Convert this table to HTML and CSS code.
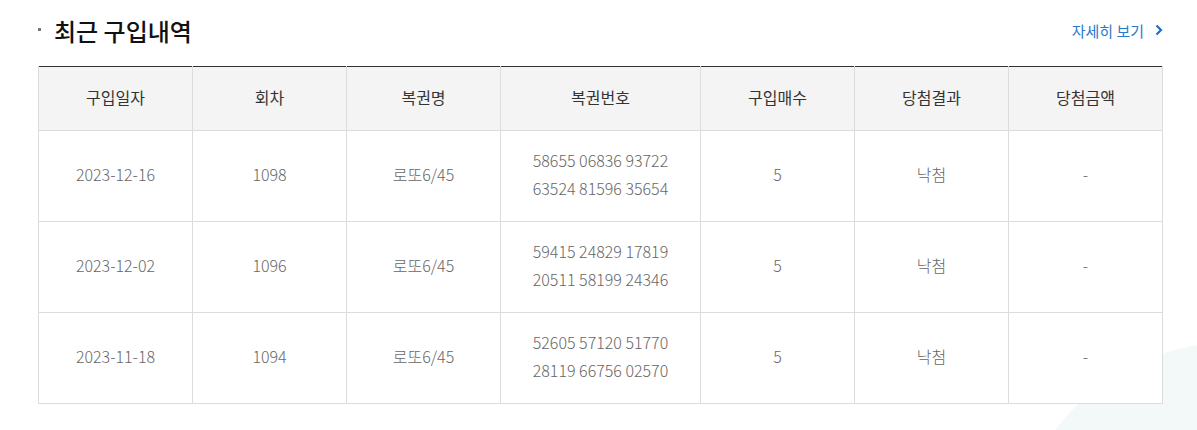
FILE: index.html
```html
<!DOCTYPE html>
<html>
<head>
    <title>최근 구입내역</title>
    <link rel="stylesheet" href="styles.css">
</head>
<body>
    <div class="page">
        <div class="deco"></div>
        <div class="section">
            <div class="section-head">
                <h2 class="title">최근 구입내역</h2>
                <a class="more" href="#">자세히 보기
                    <svg width="8" height="12" viewBox="0 0 8 12"><path d="M1.5 1.5 L6 6 L1.5 10.5" fill="none" stroke="#1f6fc6" stroke-width="2.2"/></svg>
                </a>
            </div>
            <table class="history">
                <colgroup>
                    <col class="c-sm"><col class="c-sm"><col class="c-sm">
                    <col class="c-lg"><col class="c-sm"><col class="c-sm"><col>
                </colgroup>
                <thead>
                    <tr>
                        <th>구입일자</th>
                        <th>회차</th>
                        <th>복권명</th>
                        <th>복권번호</th>
                        <th>구입매수</th>
                        <th>당첨결과</th>
                        <th>당첨금액</th>
                    </tr>
                </thead>
                <tbody>
                    <tr>
                        <td>2023-12-16</td>
                        <td>1098</td>
                        <td>로또6/45</td>
                        <td>58655 06836 93722<br>63524 81596 35654</td>
                        <td>5</td>
                        <td>낙첨</td>
                        <td>-</td>
                    </tr>
                    <tr>
                        <td>2023-12-02</td>
                        <td>1096</td>
                        <td>로또6/45</td>
                        <td>59415 24829 17819<br>20511 58199 24346</td>
                        <td>5</td>
                        <td>낙첨</td>
                        <td>-</td>
                    </tr>
                    <tr>
                        <td>2023-11-18</td>
                        <td>1094</td>
                        <td>로또6/45</td>
                        <td>52605 57120 51770<br>28119 66756 02570</td>
                        <td>5</td>
                        <td>낙첨</td>
                        <td>-</td>
                    </tr>
                </tbody>
            </table>
        </div>
    </div>
</body>
</html>
```

FILE: styles.css
```css
body {
    margin: 0;
    font-family: "Noto Sans CJK KR", "Noto Sans", sans-serif;
    background: #fff;
}
.page {
    position: relative;
    height: 430px;
    overflow: hidden;
}
.deco {
    position: absolute;
    left: 1012px;
    top: 343px;
    width: 434px;
    height: 434px;
    border-radius: 50%;
    background: #f2f9f8;
}
.section {
    position: relative;
    width: 1125px;
    margin-left: 38px;
}
.section-head {
    display: flex;
    justify-content: space-between;
    align-items: center;
    height: 66px;
}
.title {
    margin: 0;
    padding-left: 16px;
    position: relative;
    font-size: 24px;
    font-weight: 500;
    color: #111;
    top: -3px;
}
.title::before {
    content: "";
    position: absolute;
    left: 0;
    top: 15px;
    width: 3px;
    height: 3px;
    background: #777;
}
.more {
    display: flex;
    align-items: center;
    gap: 11px;
    font-size: 15px;
    color: #2a78cc;
    text-decoration: none;
    position: relative;
    top: -3px;
}
.c-sm {
    width: 154px;
}
.c-lg {
    width: 200px;
}
.history {
    width: 100%;
    border-collapse: collapse;
    table-layout: fixed;
    border-top: 1px solid #333;
}
.history th,
.history td {
    border: 1px solid #dcdcdc;
    text-align: center;
    font-size: 16px;
}
.history th {
    height: 60px;
    padding: 0 0 3px;
    background: #f4f4f4;
    color: #333;
    font-weight: 400;
    border-top: none;
}
.history td {
    height: 86px;
    padding: 0 0 4px;
    color: #666;
    font-weight: 300;
    line-height: 28px;
    background: #fff;
}
```
